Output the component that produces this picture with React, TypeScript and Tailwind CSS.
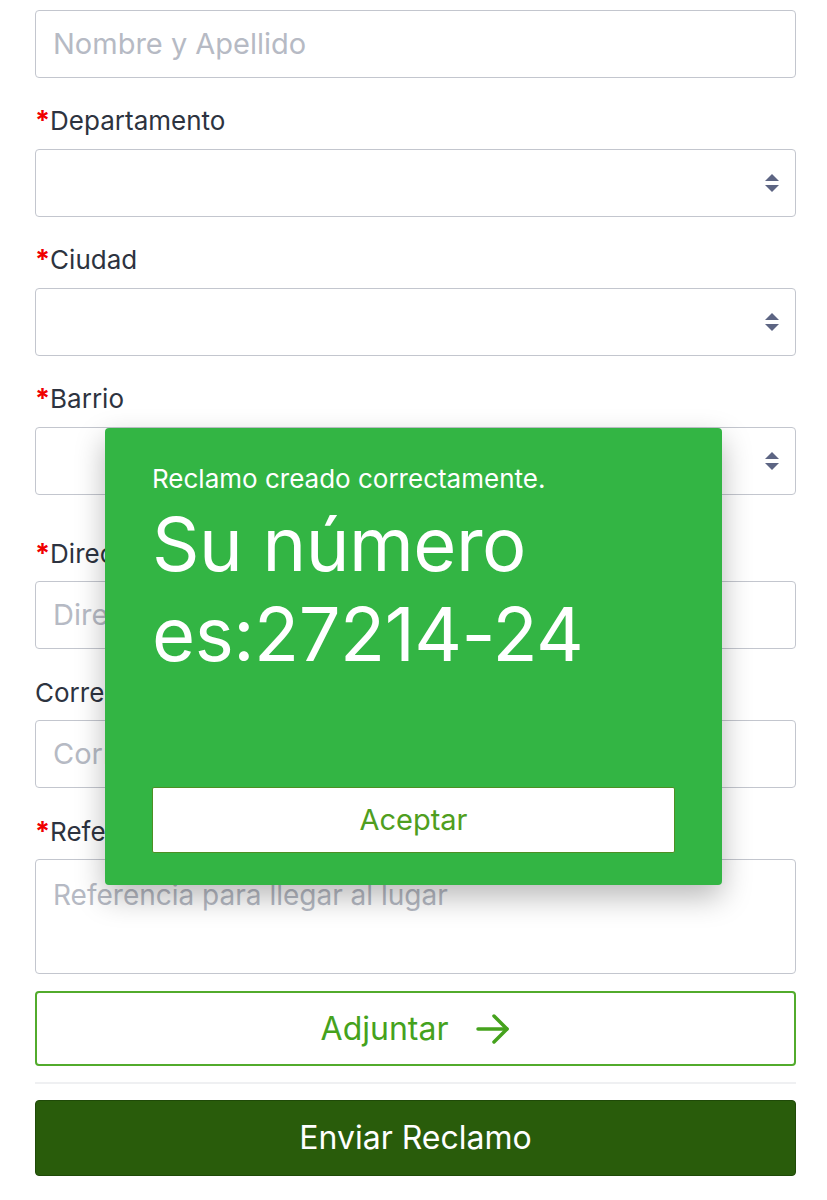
import React from 'react';

const font = { fontFamily: 'Inter, "Noto Sans", sans-serif' };

const Label = ({ text, required = true, className = '' }: { text: string; required?: boolean; className?: string }) => (
  <div className={`text-[26px] leading-[32px] text-[#2d3340] ${className}`}>
    {required && <span className="text-[#f00000] font-bold text-[27px]">*</span>}
    {text}
  </div>
);

const TextInput = ({ placeholder, className = '' }: { placeholder?: string; className?: string }) => (
  <div
    className={`h-[68px] flex items-center pl-[17px] border border-[#c3c6ce] rounded-[4px] bg-white text-[29px] text-[#b6bac4] ${className}`}
  >
    {placeholder}
  </div>
);

const SelectInput = ({ className = '' }: { className?: string }) => (
  <div className={`h-[68px] flex items-center justify-end pr-[16px] border border-[#c3c6ce] rounded-[4px] bg-white ${className}`}>
    <svg width="14" height="18" viewBox="0 0 14 18">
      <path d="M7 0 L14 7 L0 7 Z" fill="#5d6583" />
      <path d="M0 11 L14 11 L7 18 Z" fill="#5d6583" />
    </svg>
  </div>
);

export default function App() {
  return (
    <div className="relative w-[827px] h-[1200px] bg-white overflow-hidden" style={font}>
      <div className="pl-[35px] pr-[31px] pt-[10px] flex flex-col">
        <TextInput placeholder="Nombre y Apellido" />

        <Label text="Departamento" className="mt-[27px]" />
        <SelectInput className="mt-[12px]" />

        <Label text="Ciudad" className="mt-[27px]" />
        <SelectInput className="mt-[12px]" />

        <Label text="Barrio" className="mt-[27px]" />
        <SelectInput className="mt-[12px]" />

        <Label text="Dirección" className="mt-[43px]" />
        <TextInput placeholder="Dirección" className="mt-[11px]" />

        <Label text="Correo electrónico" required={false} className="mt-[28px]" />
        <TextInput placeholder="Correo electrónico" className="mt-[11px]" />

        <Label text="Referencia" className="mt-[28px]" />
        <div className="mt-[11px] h-[115px] pl-[17px] pt-[17px] border border-[#c3c6ce] rounded-[4px] text-[28px] leading-[36px] text-[#b6bac4]">
          Referencia para llegar al lugar
        </div>

        <button className="mt-[17px] h-[75px] flex items-center justify-center gap-[28px] border-2 border-[#52ab2c] rounded-[4px] bg-white text-[32px] text-[#45a21d]">
          <span>Adjuntar</span>
          <svg width="34" height="30" viewBox="0 0 34 30" fill="none" stroke="#45a21d" strokeWidth="3.5" strokeLinecap="round" strokeLinejoin="round">
            <path d="M2 15 H31" />
            <path d="M18 2 L31 15 L18 28" />
          </svg>
        </button>

        <div className="mt-[16px] h-[2px] bg-[#eff0f2]" />

        <button className="mt-[16px] h-[76px] flex items-center justify-center rounded-[4px] border border-[#1f4a08] bg-[#295c0b] text-[32px] text-white">
          Enviar Reclamo
        </button>
      </div>

      {/* success modal */}
      <div className="absolute left-[105px] top-[428px] w-[617px] h-[457px] bg-[#33b544] rounded-[4px] shadow-[0_12px_30px_rgba(0,0,0,0.28)] px-[47px] pt-[35px] flex flex-col">
        <div className="text-[26px] leading-[32px] text-white">Reclamo creado correctamente.</div>
        <div className="mt-[4px] text-[74px] leading-[90px] text-white tracking-[-0.5px]">
          Su número es:27214-24
        </div>
        <button className="mt-auto mb-[32px] h-[66px] w-full flex items-center justify-center bg-white border border-[#4d8f24] rounded-[2px] text-[29px] text-[#4f9e20]">
          Aceptar
        </button>
      </div>
    </div>
  );
}
